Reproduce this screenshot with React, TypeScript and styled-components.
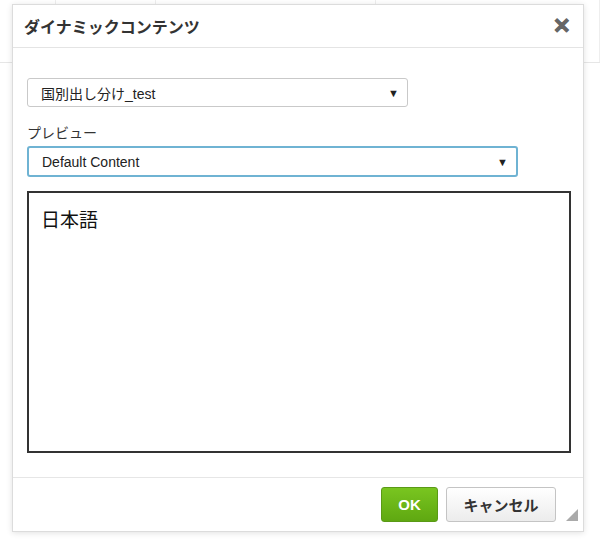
import styled, { createGlobalStyle } from 'styled-components';

const Global = createGlobalStyle`
  html, body { margin: 0; padding: 0; background: #fff; }
  body { font-family: "Liberation Sans", Arial, "Noto Sans CJK JP", sans-serif; }
`;

const Page = styled.div`
  position: relative;
  width: 600px;
  height: 539px;
  overflow: hidden;
`;

const Toolbar = styled.div`
  height: 62px;
  border-bottom: 1px solid #e6e6e6;
  display: flex;
`;

const ToolCell = styled.div<{ w: number }>`
  width: ${(p) => p.w}px;
  border-right: 1px solid #eee;
`;

const Dialog = styled.div`
  position: absolute;
  left: 12px;
  top: 4px;
  width: 570px;
  height: 526px;
  background: #fff;
  border: 1px solid #dcdcdc;
  box-shadow: 0 1px 6px rgba(0, 0, 0, 0.12);
  display: flex;
  flex-direction: column;
`;

const Header = styled.div`
  height: 42px;
  flex-shrink: 0;
  border-bottom: 1px solid #e4e4e4;
  display: flex;
  align-items: center;
  justify-content: space-between;
  padding: 0 12px 0 11px;
  color: #333;
  font-size: 16px;
  font-weight: bold;
`;

const Close = styled.span`
  color: #666;
  font-size: 21px;
  font-weight: 900;
  -webkit-text-stroke: 1px #666;
`;

const Body = styled.div`
  flex: 1;
  padding: 30px 12px 24px 14px;
  display: flex;
  flex-direction: column;
`;

const Select = styled.div<{ w: number; focused?: boolean }>`
  width: ${(p) => p.w}px;
  height: ${(p) => (p.focused ? 31 : 29)}px;
  box-sizing: border-box;
  border: ${(p) => (p.focused ? '2px solid #6fb3d3' : '1px solid #c9c9c9')};
  border-radius: 3px;
  display: flex;
  align-items: center;
  justify-content: space-between;
  padding: 0 8px 0 13px;
  font-size: 14px;
  color: #222;
`;

const Label = styled.div`
  margin: 15px 0 4px;
  font-size: 14px;
  color: #333;
`;

const Preview = styled.div`
  margin-top: 14px;
  flex: 1;
  box-sizing: border-box;
  border: 2px solid #333;
  padding: 12px 12px;
  font-size: 19px;
  color: #111;
`;

const Footer = styled.div`
  height: 53px;
  flex-shrink: 0;
  border-top: 1px solid #e6e6e6;
  display: flex;
  align-items: center;
  justify-content: flex-end;
  gap: 8px;
  padding: 0 27px 0 0;
  position: relative;
`;

const Button = styled.div<{ primary?: boolean }>`
  height: 35px;
  box-sizing: border-box;
  border-radius: 3px;
  display: flex;
  align-items: center;
  justify-content: center;
  font-size: 15px;
  font-weight: bold;
  border: 1px solid ${(p) => (p.primary ? '#5a9a16' : '#c4c4c4')};
  background: ${(p) => (p.primary ? 'linear-gradient(#79c520, #5fa811)' : 'linear-gradient(#fff, #ececec)')};
  color: ${(p) => (p.primary ? '#fff' : '#333')};
  width: ${(p) => (p.primary ? '57px' : '110px')};
`;

const Grip = styled.div`
  position: absolute;
  right: 5px;
  bottom: 10px;
  width: 0;
  height: 0;
  border-left: 12px solid transparent;
  border-bottom: 12px solid #aaa;
`;

export default function App() {
  return (
    <Page>
      <Global />
      <Toolbar>
        <ToolCell w={55} />
        <ToolCell w={100} />
        <ToolCell w={220} />
        <ToolCell w={225} />
      </Toolbar>
      <Dialog>
        <Header>
          <span>ダイナミックコンテンツ</span>
          <Close>✕</Close>
        </Header>
        <Body>
          <Select w={381}>
            <span>国別出し分け_test</span>
            <span style={{ fontSize: 11 }}>▼</span>
          </Select>
          <Label>プレビュー</Label>
          <Select w={491} focused>
            <span>Default Content</span>
            <span style={{ fontSize: 11 }}>▼</span>
          </Select>
          <Preview>日本語</Preview>
        </Body>
        <Footer>
          <Button primary>OK</Button>
          <Button>キャンセル</Button>
          <Grip />
        </Footer>
      </Dialog>
    </Page>
  );
}
